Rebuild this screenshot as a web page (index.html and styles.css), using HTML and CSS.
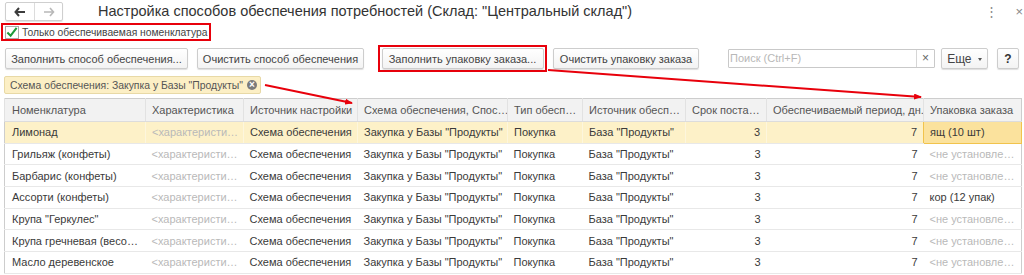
FILE: index.html
```html
<!DOCTYPE html>
<html lang="ru">
<head>
  <meta charset="UTF-8">
  <title>Настройка способов обеспечения потребностей</title>
  <link rel="stylesheet" href="styles.css">
</head>
<body>

  <div class="page">
    <div class="header">
      <div class="nav">
        <span class="nav-btn">
          <svg width="12" height="10" viewBox="0 0 12 10"><path d="M5 1 L1.5 5 L5 9 M1.5 5 H11" fill="none" stroke="#3c3c3c" stroke-width="2"/></svg>
        </span>
        <span class="nav-btn">
          <svg width="12" height="10" viewBox="0 0 12 10"><path d="M7 1 L10.5 5 L7 9 M10.5 5 H1" fill="none" stroke="#b8b8b8" stroke-width="1.6"/></svg>
        </span>
      </div>
      <h1>Настройка способов обеспечения потребностей (Склад: "Центральный склад")</h1>
      <div class="win-icons">
        <span class="dots">&#8942;</span>
        <span class="close">&times;</span>
      </div>
    </div>

    <div class="check-row">
      <label class="check marked">
        <span class="box">
          <svg width="13" height="12" viewBox="0 0 13 12"><path d="M1.5 6.5 L5 10 L11.5 1.5" fill="none" stroke="#1e9a3a" stroke-width="2.2"/></svg>
        </span>
        Только обеспечиваемая номенклатура
      </label>
    </div>

    <div class="toolbar">
      <button class="btn">Заполнить способ обеспечения...</button>
      <button class="btn">Очистить способ обеспечения</button>
      <span class="marked btn-mark"><button class="btn">Заполнить упаковку заказа...</button></span>
      <button class="btn">Очистить упаковку заказа</button>
      <div class="search">
        <span class="search-input">Поиск (Ctrl+F)</span>
        <span class="search-clear">&times;</span>
      </div>
      <button class="btn more">Еще <span class="caret"></span></button>
      <button class="btn help">?</button>
    </div>

    <div class="filter">
      <span class="tag">Схема обеспечения: Закупка у Базы "Продукты" <span class="tag-x">&times;</span></span>
    </div>

    <table class="grid">
      <colgroup>
        <col style="width:141px"><col style="width:98px"><col style="width:114px">
        <col style="width:150px"><col style="width:75px"><col style="width:103px">
        <col style="width:81px"><col style="width:157px"><col style="width:98px">
      </colgroup>
      <thead>
        <tr>
          <th>Номенклатура</th>
          <th>Характеристика</th>
          <th>Источник настройки</th>
          <th>Схема обеспечения, Спос…</th>
          <th>Тип обесп…</th>
          <th>Источник обесп…</th>
          <th>Срок поста…</th>
          <th>Обеспечиваемый период, дн.</th>
          <th>Упаковка заказа</th>
        </tr>
      </thead>
      <tbody id="rows"></tbody>
    </table>

    <svg class="arrows" width="1024" height="275" viewBox="0 0 1024 275">
      <defs>
        <marker id="head" markerWidth="8" markerHeight="6" refX="7" refY="3" orient="auto" markerUnits="userSpaceOnUse">
          <path d="M0 0 L8 3 L0 6 Z" fill="#e8000b"/>
        </marker>
      </defs>
      <line x1="265" y1="85" x2="352" y2="103" stroke="#e8000b" stroke-width="2" marker-end="url(#head)"/>
      <line x1="548" y1="70" x2="921" y2="97" stroke="#e8000b" stroke-width="2" marker-end="url(#head)"/>
    </svg>
  </div>

<script>
const items = [
  ['Лимонад', 'ящ (10 шт)'],
  ['Грильяж (конфеты)', ''],
  ['Барбарис (конфеты)', ''],
  ['Ассорти (конфеты)', 'кор (12 упак)'],
  ['Крупа "Геркулес"', ''],
  ['Крупа гречневая (весо…', ''],
  ['Масло деревенское', '']
];

const tbody = document.getElementById('rows');
items.forEach((item, i) => {
  const tr = document.createElement('tr');
  if (i === 0) tr.className = 'current';
  const pack = item[1]
    ? `<td class="${i === 0 ? 'active' : ''}">${item[1]}</td>`
    : '<td class="empty">&lt;не установле…</td>';
  tr.innerHTML = `
    <td>${item[0]}</td>
    <td class="empty">&lt;характеристи…</td>
    <td>Схема обеспечения</td>
    <td>Закупка у Базы "Продукты"</td>
    <td>Покупка</td>
    <td>База "Продукты"</td>
    <td class="num">3</td>
    <td class="num">7</td>
    ${pack}`;
  tbody.appendChild(tr);
});
</script>

</body>
</html>
```

FILE: styles.css
```css
* { box-sizing: border-box; }
body {
  margin: 0;
  font-family: 'Liberation Sans', Arial, sans-serif;
  font-size: 11px;
  color: #404040;
  background: white;
  overflow: hidden;
}
.page {
  position: relative;
  padding: 2px 3px 0 4px;
}
.header {
  display: flex;
  align-items: center;
  height: 19px;
}
.nav {
  display: flex;
  flex: none;
  margin-left: 1px;
  border: 1px solid #cfcfcf;
  border-radius: 2px;
  height: 19px;
  box-shadow: 0 1px 1px rgba(0,0,0,0.12);
}
.nav-btn {
  width: 28px;
  display: flex;
  align-items: center;
  justify-content: center;
}
.nav-btn + .nav-btn { border-left: 1px solid #dcdcdc; }
h1 {
  margin: 0 0 0 35px;
  font-weight: normal;
  font-size: 14.5px;
  color: #333;
  white-space: nowrap;
  flex: 1;
  line-height: 19px;
}
.win-icons {
  display: flex;
  gap: 17px;
  color: #888;
  font-size: 13px;
  margin-right: -2px;
}
.check-row {
  margin-top: 2px;
  margin-left: -3px;
}
.marked {
  border: 2px solid #e8000b;
}
.check {
  display: inline-flex;
  align-items: center;
  height: 18px;
  width: 210px;
  padding-left: 2px;
  gap: 3px;
  font-size: 10.3px;
  color: #444;
  white-space: nowrap;
}
.box {
  flex: none;
  width: 14px;
  height: 13px;
  border: 1px solid #a9a9a9;
  background: white;
  display: inline-flex;
  align-items: flex-end;
  justify-content: center;
}
.toolbar {
  display: flex;
  align-items: center;
  margin-top: 4px;
  height: 27px;
}
.btn {
  font-family: inherit;
  font-size: 11px;
  color: #444;
  height: 21px;
  padding: 0;
  white-space: nowrap;
  border: 1px solid #cdcdcd;
  border-radius: 2px;
  background: linear-gradient(#ffffff, #f3f3f3);
  box-shadow: 0 1px 1px rgba(0,0,0,0.13);
}
.toolbar > .btn:first-child { margin-left: 1px; width: 183px; }
.toolbar > .btn:nth-child(2) { margin-left: 9px; width: 167px; }
.btn-mark {
  display: inline-flex;
  align-items: center;
  justify-content: center;
  margin-left: 14px;
  width: 169px;
  height: 27px;
}
.btn-mark .btn { width: 162px; }
.toolbar > .btn:nth-child(4) { margin-left: 6px; width: 146px; }
.search {
  display: flex;
  margin-left: 29px;
  width: 207px;
  height: 19px;
  border: 1px solid #c9c9c9;
  border-radius: 1px;
}
.search-input {
  flex: 1;
  color: #b8b8b8;
  padding-left: 1px;
  line-height: 17px;
}
.search-clear {
  width: 18px;
  border-left: 1px solid #d6d6d6;
  text-align: center;
  color: #666;
  line-height: 16px;
  font-size: 12px;
}
.more {
  margin-left: 6px;
  width: 47px;
  font-size: 12px;
}
.caret {
  display: inline-block;
  width: 0;
  height: 0;
  border-left: 2.5px solid transparent;
  border-right: 2.5px solid transparent;
  border-top: 3px solid #555;
  vertical-align: middle;
  margin-left: 3px;
}
.help {
  margin-left: 9px;
  width: 22px;
  font-size: 12px;
  font-weight: bold;
  color: #333;
}
.filter {
  margin-top: 4px;
  height: 22px;
}
.tag {
  display: inline-flex;
  align-items: center;
  gap: 4px;
  height: 18px;
  width: 257px;
  padding-left: 5px;
  background: #fcefc5;
  border: 1px solid #e8d9a6;
  border-radius: 2px;
  font-size: 10.4px;
  color: #555;
  white-space: nowrap;
}
.tag-x {
  display: inline-block;
  width: 10px;
  height: 10px;
  border-radius: 50%;
  background: #7b7b7b;
  color: white;
  font-size: 10px;
  line-height: 9px;
  text-align: center;
  font-weight: bold;
}
.grid {
  border-collapse: collapse;
  table-layout: fixed;
  width: 1017px;
  border: 1px solid #cdcdcd;
  border-bottom: none;
}
.grid th {
  height: 23px;
  background: #f2f2f2;
  font-weight: normal;
  text-align: left;
  color: #555;
  padding: 0 6px;
  border-left: 1px solid #e2e2e2;
  border-bottom: 1px solid #dcdcdc;
  white-space: nowrap;
  overflow: hidden;
}
.grid td {
  height: 21.7px;
  padding: 0 6px;
  border-bottom: 1px solid #e8e8e8;
  white-space: nowrap;
  overflow: hidden;
  color: #3a3a3a;
}
.grid th:first-child, .grid td:first-child { padding-left: 7px; }
.grid td.empty { color: #b9b9b9; }
.grid td.num { text-align: right; }
.grid tr.current td {
  background: #fdf1c8;
  border-left: 1px solid #fdf6dd;
}
.grid tr.current td:first-child { border-left: none; }
.grid tr.current td.active {
  background: #fbe29d;
  border: 1px solid #f1c34c;
}
.arrows {
  position: absolute;
  left: 0;
  top: 0;
  pointer-events: none;
}
```
